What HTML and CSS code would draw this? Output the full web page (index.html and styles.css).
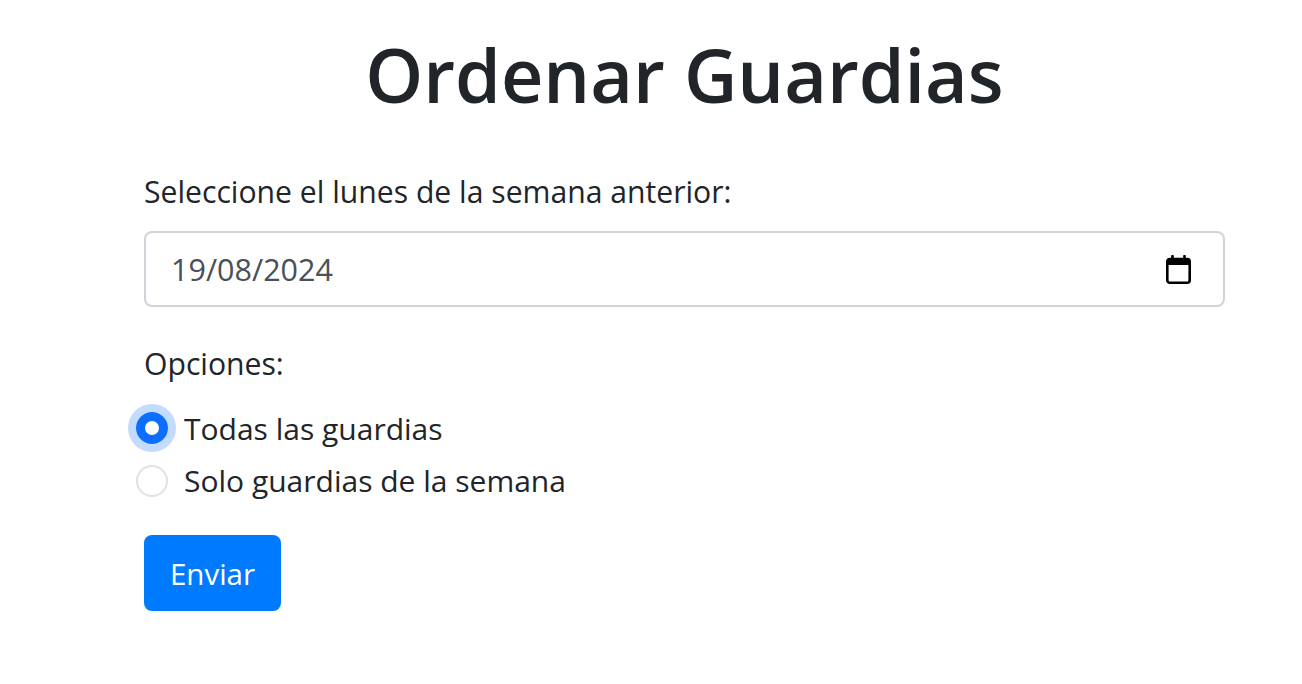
FILE: index.html
```html
<!DOCTYPE html>
<html lang="es">
<head>
    <meta charset="UTF-8">
    <meta name="viewport" content="width=device-width, initial-scale=1.0">
    <title>Ordenar Guardias</title>
    <link rel="stylesheet" href="styles.css">
</head>
<body>

<div class="container">
    <h1>Ordenar Guardias</h1>
    <form>
        <div class="form-group">
            <label class="form-label">Seleccione el lunes de la semana anterior:</label>
            <div class="date-input">
                <span>19/08/2024</span>
                <svg class="calendar-icon" width="25" height="29" viewBox="0 0 25 29">
                    <path d="M6.500 1v3M18.500 1v3" stroke="#000" stroke-width="2.600" stroke-linecap="round"/>
                    <rect x="1.300" y="4" width="22.400" height="23.700" rx="2.500" fill="none" stroke="#000" stroke-width="2.600"/>
                    <rect x="2" y="4" width="21" height="6" fill="#000"/>
                </svg>
            </div>
        </div>
        <div class="options">
            <div class="form-label">Opciones:</div>
            <div class="form-check first">
                <span class="radio checked"></span>
                <label>Todas las guardias</label>
            </div>
            <div class="form-check">
                <span class="radio"></span>
                <label>Solo guardias de la semana</label>
            </div>
        </div>
        <button type="button">Enviar</button>
    </form>
</div>

</body>
</html>
```

FILE: styles.css
```css
body {
    font-family: "Open Sans", "Noto Sans", Arial, sans-serif;
    color: #212529;
    background-color: #fff;
    margin: 0;
    padding: 0;
}

.container {
    width: 1081px;
    margin-left: 144px;
}

h1 {
    font-size: 73.700px;
    font-weight: 600;
    line-height: 86px;
    text-align: center;
    margin: 32px 0 0;
}

.form-group {
    margin-top: 53px;
}

.form-label {
    font-size: 30.150px;
    line-height: 42px;
    display: block;
}

.date-input {
    display: flex;
    align-items: center;
    justify-content: space-between;
    box-sizing: border-box;
    height: 76px;
    margin-top: 18px;
    padding: 0 32px 0 25px;
    font-size: 30.500px;
    color: #495057;
    border: 2px solid #ced4da;
    border-radius: 8px;
}

.options {
    margin-top: 36px;
}

.form-check {
    display: flex;
    align-items: center;
    height: 53px;
    font-size: 30px;
    margin-left: -8px;
    gap: 16px;
}

.form-check.first {
    height: 52px;
    margin-top: 17px;
}

.radio {
    box-sizing: border-box;
    width: 32px;
    height: 32px;
    border: 2px solid #dee2e6;
    border-radius: 50%;
}

.radio.checked {
    border: 9px solid #0d6efd;
    box-shadow: 0 0 0 8px #c2dbfe;
}

button {
    display: block;
    box-sizing: border-box;
    width: 137px;
    height: 76px;
    margin-top: 28px;
    font-family: inherit;
    font-size: 29.500px;
    color: #fff;
    background-color: #007bff;
    border: none;
    border-radius: 8px;
    cursor: pointer;
}
```
